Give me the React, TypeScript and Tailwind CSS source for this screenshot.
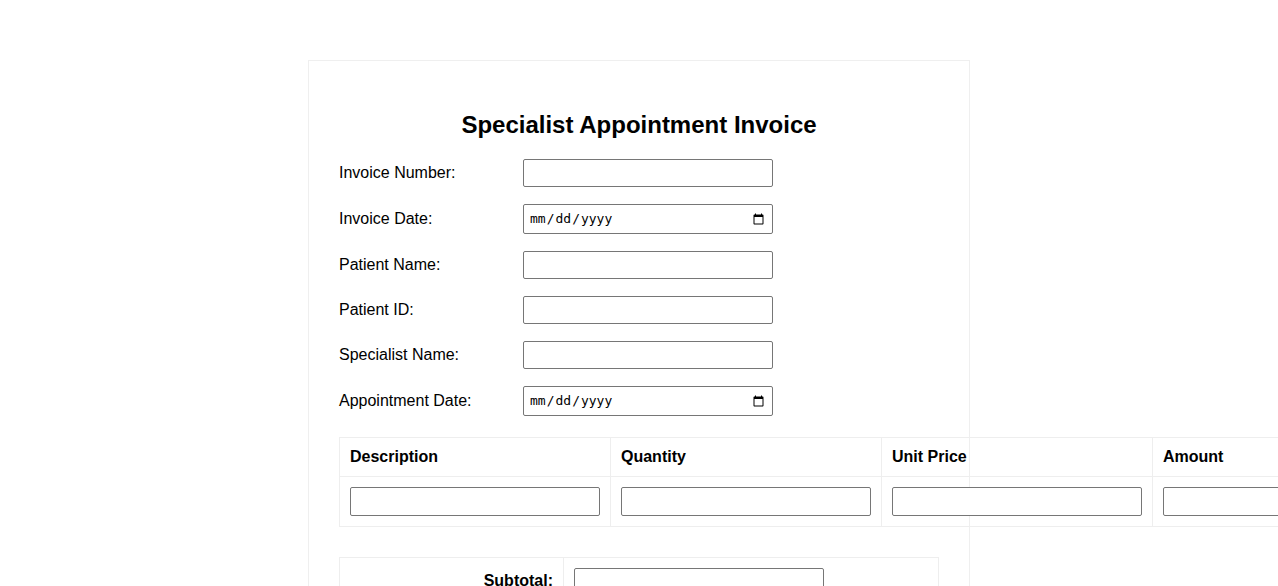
import React from "react";

const rows: { label: string; type: string }[] = [
  { label: "Invoice Number:", type: "text" },
  { label: "Invoice Date:", type: "date" },
  { label: "Patient Name:", type: "text" },
  { label: "Patient ID:", type: "text" },
  { label: "Specialist Name:", type: "text" },
  { label: "Appointment Date:", type: "date" },
];

function Field({ type }: { type: string }) {
  if (type === "date") {
    return (
      <input
        type="date"
        className="w-[250px] h-[30px] border border-[#767676] rounded-[2px] px-[5px] text-[13px] text-black bg-white [font-family:'DejaVu_Sans_Mono',monospace]"
      />
    );
  }
  return (
    <input
      type="text"
      className="w-[250px] h-[28px] border border-[#767676] rounded-[2px] px-[5px] text-[13px] bg-white"
    />
  );
}

export default function App() {
  return (
    <div className="min-h-screen bg-white text-black [font-family:'Liberation_Sans',Arial,sans-serif]">
      <div className="pt-[60px]">
        <div className="mx-auto w-[662px] border border-[#efefef] p-[30px]">
          <h1 className="text-center text-[24px] font-bold leading-[28px] mt-[20px] mb-[20px]">
            Specialist Appointment Invoice
          </h1>
          <div className="flex flex-col gap-[17px]">
            {rows.map((r) => (
              <div key={r.label} className="flex items-center">
                <label className="w-[184px] text-[16px] leading-[18px]">{r.label}</label>
                <Field type={r.type} />
              </div>
            ))}
          </div>
          <table className="mt-[21px] border-collapse w-max">
            <thead>
              <tr>
                {["Description", "Quantity", "Unit Price", "Amount"].map((h) => (
                  <th
                    key={h}
                    className="border border-[#eeeeee] w-[271px] px-[10px] py-[10px] text-left text-[16px] leading-[18px] font-bold"
                  >
                    {h}
                  </th>
                ))}
              </tr>
            </thead>
            <tbody>
              <tr>
                {[0, 1, 2, 3].map((i) => (
                  <td key={i} className="border border-[#eeeeee] px-[10px] pt-[10px] pb-[10px] align-top">
                    <input
                      type="text"
                      className="block w-[250px] h-[29px] border border-[#767676] rounded-[2px] px-[5px] text-[13px] bg-white"
                    />
                  </td>
                ))}
              </tr>
            </tbody>
          </table>
          <table className="mt-[30px] border-collapse w-[600px]">
            <tbody>
              <tr>
                <td className="border border-[#eeeeee] w-[224px] px-[10px] pt-[14px] pb-[10px] text-right font-bold text-[16px] leading-[18px] align-top">
                  Subtotal:
                </td>
                <td className="border border-[#eeeeee] px-[10px] py-[10px]">
                  <input
                    type="text"
                    className="block w-[250px] h-[28px] border border-[#767676] rounded-[2px] px-[5px] text-[13px] bg-white"
                  />
                </td>
              </tr>
            </tbody>
          </table>
        </div>
      </div>
    </div>
  );
}
